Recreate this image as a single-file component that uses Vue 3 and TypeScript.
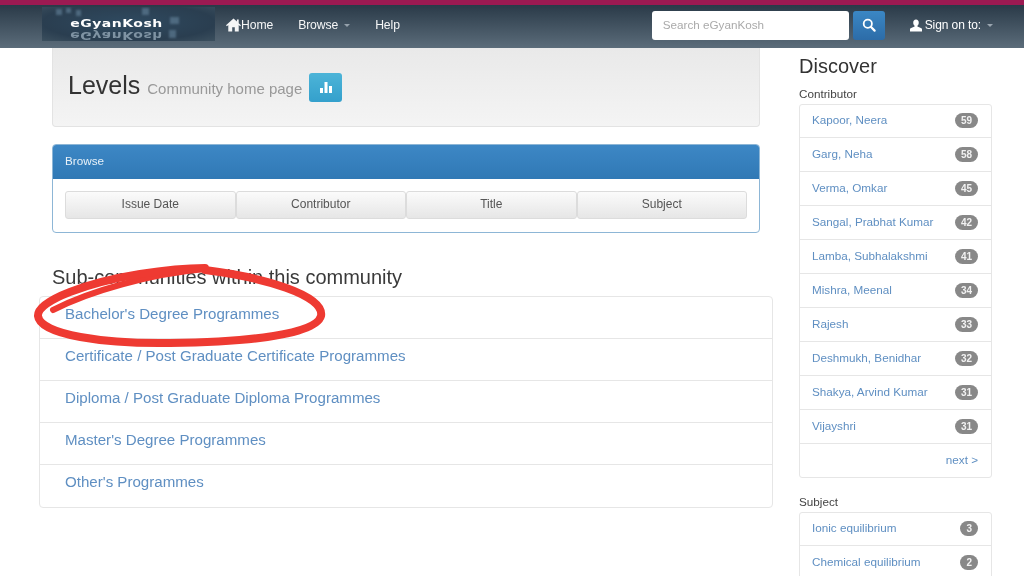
<script setup lang="ts">
const browse: string[] = ['Issue Date', 'Contributor', 'Title', 'Subject']
const subs: string[] = [
  "Bachelor's Degree Programmes",
  'Certificate / Post Graduate Certificate Programmes',
  'Diploma / Post Graduate Diploma Programmes',
  "Master's Degree Programmes",
  "Other's Programmes",
]
const contributors: [string, number][] = [
  ['Kapoor, Neera', 59], ['Garg, Neha', 58], ['Verma, Omkar', 45],
  ['Sangal, Prabhat Kumar', 42], ['Lamba, Subhalakshmi', 41], ['Mishra, Meenal', 34],
  ['Rajesh', 33], ['Deshmukh, Benidhar', 32], ['Shakya, Arvind Kumar', 31], ['Vijayshri', 31],
]
const subjects: [string, number][] = [['Ionic equilibrium', 3], ['Chemical equilibrium', 2]]
</script>

<template>
  <div class="page">
    <div class="topline"></div>
    <header class="navbar">
      <div class="logo">
        <span class="blocks"><i></i><i></i><i></i><i></i><i></i><i></i></span>
        <span class="logo-text">eGyanKosh</span>
        <span class="logo-mirror">eGyanKosh</span>
      </div>
      <nav class="nav">
        <a class="home">
          <svg width="15" height="14" viewBox="0 0 15 14"><path fill="#fff" d="M7.5 .5 0 7.3l.9 1L2.3 7v6.6h3.900V9.200h2.600v4.400h3.900V7l1.400 1.300.9-1-2.300-2.100V1.400h-1.800v2.100z"/></svg>
          Home
        </a>
        <a>Browse <b class="caret"></b></a>
        <a>Help</a>
      </nav>
      <div class="search">
        <div class="search-input">Search eGyanKosh</div>
        <button class="search-btn" aria-label="Search">
          <svg width="14" height="14" viewBox="0 0 14 14"><circle cx="5.800" cy="5.800" r="4.100" fill="none" stroke="#fff" stroke-width="1.800"/><path d="m8.800 8.800 3.800 3.800" stroke="#fff" stroke-width="2.200" stroke-linecap="round"/></svg>
        </button>
      </div>
      <a class="signin">
        <svg width="12" height="13" viewBox="0 0 13 13"><path fill="#fff" d="M6.500 0C4.600 0 3.500 1.400 3.500 3.400c0 1.400.6 2.700 1.500 3.400v.8L.6 9.600C.2 9.800 0 10.200 0 10.600V13h13v-2.400c0-.4-.2-.8-.6-1L8 7.600v-.8c.9-.7 1.500-2 1.500-3.400C9.500 1.400 8.400 0 6.500 0z"/></svg>
        Sign on to: <b class="caret"></b>
      </a>
    </header>

    <div class="content">
      <main class="main">
        <section class="jumbo">
          <h1>Levels <small>Community home page</small></h1>
          <button class="stats" aria-label="Statistics">
            <svg width="12" height="11" viewBox="0 0 12 11"><path fill="#fff" d="M0 6h3v5H0zM4.500 0h3v11h-3zM9 4h3v7H9z"/></svg>
          </button>
        </section>

        <section class="panel">
          <div class="panel-head">Browse</div>
          <div class="panel-body">
            <button v-for="b in browse" :key="b" class="bbtn">{{ b }}</button>
          </div>
        </section>

        <h2>Sub-communities within this community</h2>
        <ul class="sublist">
          <li v-for="s in subs" :key="s"><a>{{ s }}</a></li>
        </ul>
      </main>

      <aside class="side">
        <h3>Discover</h3>
        <h4>Contributor</h4>
        <ul class="facet">
          <li v-for="c in contributors" :key="c[0]"><a>{{ c[0] }}</a><span class="badge">{{ c[1] }}</span></li>
          <li class="next"><a>next &gt;</a></li>
        </ul>
        <h4 class="second">Subject</h4>
        <ul class="facet">
          <li v-for="c in subjects" :key="c[0]"><a>{{ c[0] }}</a><span class="badge">{{ c[1] }}</span></li>
        </ul>
      </aside>
    </div>

    <svg class="scribble" width="1024" height="576" viewBox="0 0 1024 576">
      <g fill="none" stroke="#ee3a32" stroke-linecap="round" stroke-linejoin="round">
        <path stroke-width="6" d="M53 310 C90 291 150 274 205 269"/>
        <path stroke-width="8" d="M205 270 C262 277 325 295 321 316 C316 334 250 342 170 343 C105 344 40 335 38 316 C37 300 90 282 140 274 C165 270 185 268 205 268"/>
      </g>
    </svg>
  </div>
</template>

<style>
html, body { margin: 0; background: #fff; }
</style>

<style scoped>
.page {
  position: relative;
  width: 1024px;
  height: 576px;
  overflow: hidden;
  background: #fff;
  font-family: "Liberation Sans", Arial, sans-serif;
  color: #333;
  filter: blur(0.35px);
}
.topline { height: 5px; background: #9c1a52; }
.navbar {
  height: 43px;
  display: flex;
  align-items: center;
  padding: 0 0 3px 42px;
  background: linear-gradient(to bottom, #2a3a48, #5b6c7a);
  box-sizing: border-box;
}
.logo {
  position: relative;
  width: 173px;
  height: 34px;
  margin-top: -3px;
  flex: none;
  background: radial-gradient(ellipse at 50% 45%, #2f4a60, #2a3e50 70%, #3c505f);
  display: flex;
  flex-direction: column;
  align-items: center;
  padding-right: 24px;
  box-sizing: border-box;
  overflow: hidden;
}
.logo-text { font: bold 14px/11px "DejaVu Sans", sans-serif; color: #fff; margin-top: 11px; letter-spacing: .5px; transform: scaleY(.7); }
.logo-mirror { font: bold 14px/11px "DejaVu Sans", sans-serif; color: #7f93a3; margin-top: 1px; letter-spacing: .5px; transform: scaleY(-.7); }
.blocks i { position: absolute; background: #6a8aa2; opacity: .55; filter: blur(1px); }
.blocks i:nth-child(1) { left: 14px; top: 2px; width: 6px; height: 6px; }
.blocks i:nth-child(2) { left: 24px; top: 1px; width: 5px; height: 5px; }
.blocks i:nth-child(3) { left: 34px; top: 3px; width: 5px; height: 6px; }
.blocks i:nth-child(4) { left: 100px; top: 1px; width: 7px; height: 7px; }
.blocks i:nth-child(5) { left: 128px; top: 10px; width: 9px; height: 7px; }
.blocks i:nth-child(6) { left: 127px; top: 23px; width: 7px; height: 8px; }
.nav { display: flex; margin-left: 11px; }
.nav a { color: #fff; font-size: 12.200px; letter-spacing: -.1px; margin-right: 25px; display: flex; align-items: center; gap: 4px; opacity: .95; }
.nav .home { gap: 0; }
.caret {
  display: inline-block;
  width: 0;
  height: 0;
  margin-left: 2px;
  border-top: 3px solid #9aa6b0;
  border-left: 3px solid transparent;
  border-right: 3px solid transparent;
}
.search { display: flex; margin-left: auto; gap: 4px; }
.search-input {
  width: 197px;
  height: 29px;
  background: #fff;
  border-radius: 3px;
  box-sizing: border-box;
  padding: 0 11px;
  font-size: 11.700px;
  line-height: 28px;
  color: #aaa;
}
.search-btn {
  width: 32px;
  height: 29px;
  border: none;
  padding: 0;
  border-radius: 3px;
  background: linear-gradient(to bottom, #3b87c4, #2c6ca8);
  display: flex;
  align-items: center;
  justify-content: center;
}
.signin { color: #fff; font-size: 12px; letter-spacing: -.1px; display: flex; align-items: center; gap: 3px; margin: 0 31px 0 25px; }
.signin .caret { margin-left: 3px; }
.content { display: flex; }
.main { width: 734px; margin-left: 39px; flex: none; }
.jumbo {
  margin: 0 13px;
  height: 79px;
  box-sizing: border-box;
  padding: 22px 15px 0;
  display: flex;
  align-items: flex-start;
  gap: 7px;
  background: linear-gradient(to bottom, #e9e9e9, #f4f4f4);
  border: 1px solid #e3e3e3;
  border-top: none;
  border-radius: 0 0 4px 4px;
}
h1 { margin: 0; font-size: 25px; line-height: 30px; font-weight: 400; color: #333; }
h1 small { font-size: 15px; color: #999; }
.stats {
  width: 33px;
  height: 29px;
  margin-top: 3px;
  border: none;
  padding: 0;
  border-radius: 3px;
  background: linear-gradient(to bottom, #4cb4d8, #34a0cc);
  display: flex;
  align-items: center;
  justify-content: center;
}
.panel {
  margin: 17px 13px 0;
  height: 89px;
  box-sizing: border-box;
  border: 1px solid #8db6d6;
  border-radius: 4px;
  overflow: hidden;
}
.panel-head {
  height: 34px;
  background: linear-gradient(to bottom, #3d87c5, #3079b5);
  color: #e8f1f8;
  font-size: 11.700px;
  line-height: 32px;
  padding-left: 12px;
}
.panel-body { display: flex; padding: 12px 12px 0; }
.bbtn {
  flex: 1;
  height: 28px;
  padding: 0 0 2px;
  border: 1px solid #dcdcdc;
  border-radius: 3px;
  background: linear-gradient(to bottom, #fbfbfb, #e6e6e6);
  font: 12px "Liberation Sans", Arial, sans-serif;
  color: #555;
}
h2 { margin: 33px 0 0 13px; font-size: 20px; line-height: 22px; font-weight: 400; color: #3a3a3a; }
.sublist {
  list-style: none;
  margin: 8px 0 0;
  padding: 0;
  border: 1px solid #e6e6e6;
  border-radius: 4px;
}
.sublist li {
  height: 42px;
  box-sizing: border-box;
  padding-left: 25px;
  line-height: 33px;
  font-size: 15.100px;
  border-bottom: 1px solid #e6e6e6;
}
.sublist li:last-child { border-bottom: none; }
a { color: #5f8fc2; }
.side { width: 193px; margin-left: 26px; flex: none; }
h3 { margin: 6px 0 0; font-size: 20px; line-height: 25px; font-weight: 400; color: #333; }
h4 { margin: 8px 0 0; font-size: 11.700px; line-height: 14px; font-weight: 400; color: #444; }
h4.second { margin-top: 17px; }
.facet {
  list-style: none;
  margin: 3px 0 0;
  padding: 0;
  border: 1px solid #e6e6e6;
  border-radius: 3px;
}
.facet li {
  height: 34px;
  box-sizing: border-box;
  padding: 0 13px 1px 12px;
  display: flex;
  align-items: center;
  justify-content: space-between;
  font-size: 11.700px;
  border-bottom: 1px solid #e6e6e6;
}
.facet li:first-child { height: 33px; padding-bottom: 2px; }
.facet li:last-child { border-bottom: none; height: 33px; }
.facet li a { margin-bottom: 2px; }
.facet .next { justify-content: flex-end; }
.badge {
  padding: 0 6px;
  height: 15px;
  border-radius: 8px;
  background: #888;
  color: #f2f2f2;
  font-size: 10px;
  font-weight: 700;
  line-height: 15px;
  text-align: center;
}
.scribble { position: absolute; left: 0; top: 0; pointer-events: none; }
</style>
